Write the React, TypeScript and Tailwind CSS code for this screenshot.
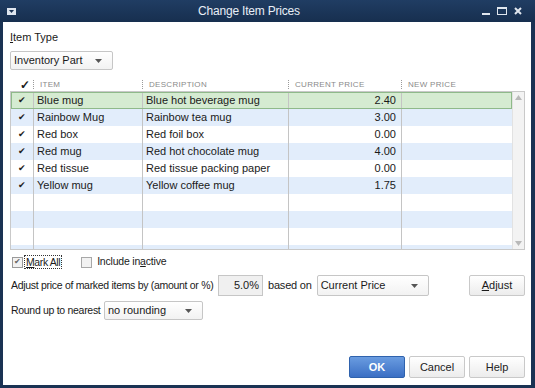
const ROWS = [
  { item: "Blue mug", desc: "Blue hot beverage mug", price: "2.40" },
  { item: "Rainbow Mug", desc: "Rainbow tea mug", price: "3.00" },
  { item: "Red box", desc: "Red foil box", price: "0.00" },
  { item: "Red mug", desc: "Red hot chocolate mug", price: "4.00" },
  { item: "Red tissue", desc: "Red tissue packing paper", price: "0.00" },
  { item: "Yellow mug", desc: "Yellow coffee mug", price: "1.75" },
  null,
  null,
  null,
  null,
];

const COLS = "grid-cols-[23px_109px_146px_113px_112px]";

function Caret() {
  return (
    <svg width="7" height="4" viewBox="0 0 7 4" className="shrink-0">
      <path d="M0 0h7L3.5 4z" fill="#555" />
    </svg>
  );
}

function Select({ label, className }: { label: string; className: string }) {
  return (
    <div
      className={`flex items-center justify-between rounded-[2px] border border-[#c6c6c6] bg-gradient-to-b from-white to-[#f2f2f2] pl-[3px] pr-[10px] text-[11px] text-[#1a1a1a] ${className}`}
    >
      <span>{label}</span>
      <Caret />
    </div>
  );
}

function Btn({ children, primary }: { children: React.ReactNode; primary?: boolean }) {
  return (
    <div
      className={
        primary
          ? "flex h-[22px] w-[56px] items-center justify-center rounded-[2px] border border-[#2f62ad] bg-gradient-to-b from-[#6a9ce0] to-[#3b6fc4] text-[11px] font-bold text-white"
          : "flex h-[22px] w-[56px] items-center justify-center rounded-[2px] border border-[#c9c9c9] bg-gradient-to-b from-white to-[#ececec] text-[11px] text-[#222]"
      }
    >
      {children}
    </div>
  );
}

function HeaderCell({ text }: { text: string }) {
  return (
    <div className="flex items-center gap-[6px]">
      <span className="h-[9px] border-l border-dotted border-[#9a9a9a]" />
      <span className="text-[8px] tracking-[0.3px] text-[#8a8a8a]">{text}</span>
    </div>
  );
}

export default function App() {
  return (
    <div
      className="flex h-[388px] w-[535px] flex-col bg-[#1a3253]"
      style={{ fontFamily: '"Liberation Sans", Arial, sans-serif' }}
    >
      {/* title bar */}
      <div className="relative flex h-[22px] items-center bg-gradient-to-b from-[#203d63] to-[#172f4f] px-[7px]">
        <div className="flex h-[7px] w-[9px] items-start justify-center border border-[#dfe6ef] bg-[#dfe6ef]">
          <svg width="5" height="3" viewBox="0 0 5 3" className="mt-[1px]">
            <path d="M0 0h5L2.5 3z" fill="#1a3253" />
          </svg>
        </div>
        <div className="flex-1 text-center text-[12px] tracking-[-0.2px] text-[#e8eef6]">Change Item Prices</div>
        <div className="flex items-center gap-[7px] pr-[6px]">
          <span className="mt-[6px] h-[2px] w-[8px] bg-[#e0e6ee]" />
          <span className="h-[8px] w-[10px] border border-t-2 border-[#e0e6ee]" />
          <svg width="8" height="8" viewBox="0 0 8 8">
            <path d="M1 1l6 6M7 1l-6 6" stroke="#e0e6ee" strokeWidth="2" />
          </svg>
        </div>
      </div>

      {/* body */}
      <div className="mb-[3px] ml-[3px] mr-[4px] flex flex-1 flex-col bg-white pl-[7px] pr-[6px] text-[11px] text-[#1a1a1a]">
        <div className="mt-[9px] h-[13px] leading-[13px]">
          <span className="underline">I</span>tem Type
        </div>
        <Select label="Inventory Part" className="mt-[7px] h-[19px] w-[103px]" />

        {/* table header */}
        <div className={`mt-[8px] grid h-[13px] ${COLS}`}>
          <div className="flex items-center justify-end pr-[3px] text-[12px] font-bold leading-none">✓</div>
          <HeaderCell text="ITEM" />
          <HeaderCell text="DESCRIPTION" />
          <HeaderCell text="CURRENT PRICE" />
          <HeaderCell text="NEW PRICE" />
        </div>

        {/* table body */}
        <div className="flex h-[159px] w-[515px] border border-[#c9c9c9]">
          <div className="flex-1 overflow-hidden">
            {ROWS.map((r, i) => {
              const bg = i === 0 ? "bg-[#d5ebd1]" : i % 2 === 1 ? "bg-[#e2edfb]" : "bg-white";
              return (
                <div
                  key={i}
                  className={`grid h-[17px] ${COLS} ${bg} ${i === 0 ? "outline outline-1 -outline-offset-1 outline-[#8fb98a]" : ""}`}
                >
                  <div className="flex items-center justify-center border-r border-[#c4c4c4] text-[9px] text-[#222]">
                    {r ? "✔" : ""}
                  </div>
                  <div className="flex items-center border-r border-[#c4c4c4] pl-[3px]">{r?.item}</div>
                  <div className="flex items-center border-r border-[#c4c4c4] pl-[3px]">{r?.desc}</div>
                  <div className="flex items-center justify-end border-r border-[#c4c4c4] pr-[5px]">{r?.price}</div>
                  <div />
                </div>
              );
            })}
          </div>
          <div className="flex w-[12px] flex-col items-center justify-between border-l border-[#e2e2e2] bg-[#f3f3f3] py-[3px]">
            <svg width="7" height="5" viewBox="0 0 7 5">
              <path d="M0 5h7L3.5 0z" fill="#b9b9b9" />
            </svg>
            <svg width="7" height="5" viewBox="0 0 7 5">
              <path d="M0 0h7L3.5 5z" fill="#b9b9b9" />
            </svg>
          </div>
        </div>

        {/* mark all */}
        <div className="mt-[5px] flex h-[14px] items-center">
          <span className="ml-[2px] flex h-[11px] w-[11px] items-center justify-center border border-[#9a9a9a] bg-[#f2f2f2] text-[8px] leading-none text-[#666]">
            ✔
          </span>
          <span className="ml-[1px] whitespace-nowrap border border-dotted border-[#333] px-[1px] text-[10.5px] leading-[12px] tracking-[-0.4px]">
            <span className="underline">M</span>ark All
          </span>
          <span className="ml-[19px] h-[11px] w-[11px] border border-[#a8a8a8] bg-[#f2f2f2]" />
          <span className="ml-[5px] whitespace-nowrap text-[10.5px] tracking-[-0.2px]">
            Include in<span className="underline">a</span>ctive
          </span>
        </div>

        {/* adjust row */}
        <div className="mt-[6px] flex h-[21px] items-center">
          <span className="ml-[1px] w-[207px] whitespace-nowrap text-[10.5px] tracking-[-0.3px]">
            Adjust price of marked items by (amount or %)
          </span>
          <div className="flex h-[21px] w-[45px] items-center justify-end border border-[#c6c6c6] bg-[#f0f0f0] pr-[3px]">
            5.0%
          </div>
          <span className="ml-[5px] whitespace-nowrap tracking-[-0.2px]">based on</span>
          <Select label="Current Price" className="ml-[5px] h-[21px] w-[112px]" />
          <div className="ml-auto">
            <div className="flex h-[21px] w-[56px] items-center justify-center rounded-[2px] border border-[#c9c9c9] bg-gradient-to-b from-white to-[#ececec]">
              <span>
                <span className="underline">A</span>djust
              </span>
            </div>
          </div>
        </div>

        {/* rounding */}
        <div className="mt-[5px] flex h-[19px] items-center">
          <span className="ml-[1px] w-[93px] whitespace-nowrap text-[10.5px] tracking-[-0.3px]">Round up to nearest</span>
          <Select label="no rounding" className="h-[19px] w-[99px]" />
        </div>

        {/* buttons */}
        <div className="mt-auto mb-[7px] flex justify-end gap-[4px]">
          <Btn primary>OK</Btn>
          <Btn>Cancel</Btn>
          <Btn>Help</Btn>
        </div>
      </div>
    </div>
  );
}
